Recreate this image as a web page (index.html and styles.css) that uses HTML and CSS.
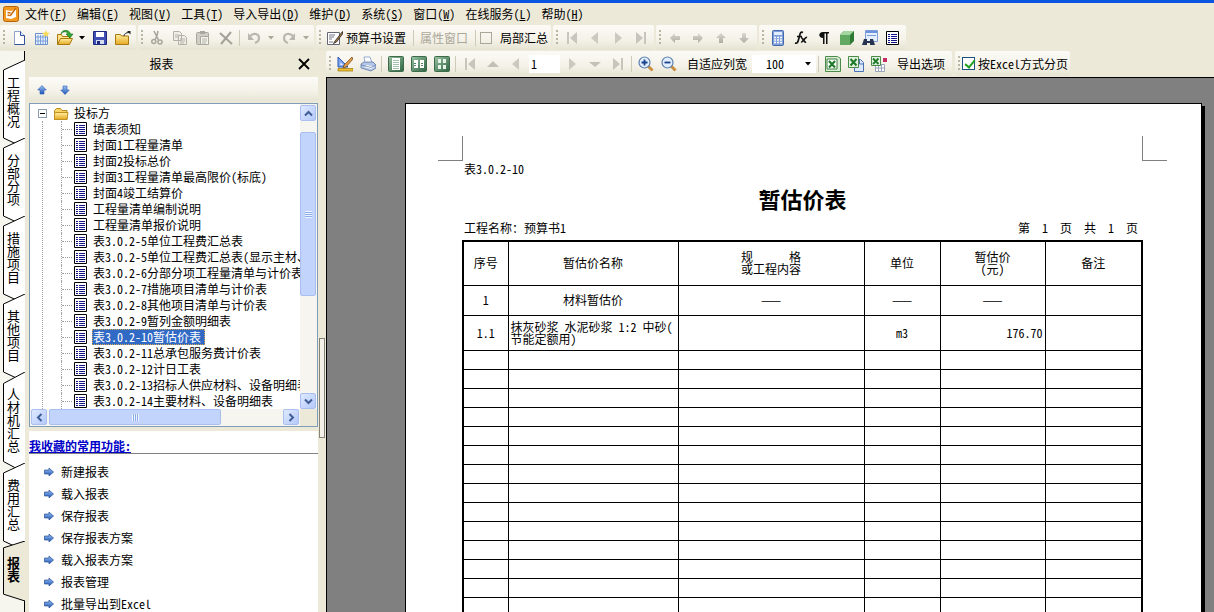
FILE: index.html
```
<!DOCTYPE html>
<html lang="zh-CN">
<head>
<meta charset="utf-8">
<title>报表</title>
<link rel="stylesheet" href="styles.css">
</head>
<body>
<svg class="defs" aria-hidden="true">
  <defs>
    <linearGradient id="gGreen" x1="0" y1="0" x2="1" y2="1"><stop offset="0" stop-color="#9cc4a4"/><stop offset="1" stop-color="#2c6340"/></linearGradient>
    <linearGradient id="gBlue" x1="0" y1="0" x2="0" y2="1"><stop offset="0" stop-color="#9cc3f2"/><stop offset="1" stop-color="#1f55b8"/></linearGradient>
    <linearGradient id="gGold" x1="0" y1="0" x2="0" y2="1"><stop offset="0" stop-color="#fff0a0"/><stop offset="1" stop-color="#e5a823"/></linearGradient>
    <linearGradient id="gGray" x1="0" y1="0" x2="0" y2="1"><stop offset="0" stop-color="#dcdad0"/><stop offset="1" stop-color="#aeaca2"/></linearGradient>
  </defs>
  <symbol id="app" viewBox="0 0 16 16"><rect x=".5" y=".5" width="15" height="15" rx="2" fill="#f39a1e" stroke="#b9640c"/><path d="M3 4l5 1 5-2v8l-5 2-5-1z" fill="#fff"/><path d="M4.500 6.500l3 .5M4.500 9l2 .5M13 2L7 10" stroke="#c8690d" stroke-width="1.500" fill="none"/></symbol>
  <symbol id="new" viewBox="0 0 16 16"><path d="M3.500 1.500h6l4 4v9h-10z" fill="#fff" stroke="#8fa3c8"/><path d="M13.500 5.500v9h-10" fill="none" stroke="#33549a"/><path d="M9.500 1.500v4h4" fill="#dbe6fa" stroke="#33549a"/></symbol>
  <symbol id="newgrid" viewBox="0 0 16 16"><path d="M1.500 3.500h10l2 2v9h-12z" fill="#eaf2ff" stroke="#6d8fcb"/><path d="M4 5v9M6.500 5v9M9 5v9M11.500 5v9M2 7h11M2 11h11" stroke="#7b9fd9" fill="none"/><path d="M12 0l1 2.500L16 3l-2.300 1.500L14 7l-2-1.500L9.500 7l.5-2.500L8 3l3-.500z" fill="#f7dc54"/></symbol>
  <symbol id="open" viewBox="0 0 16 16"><path d="M.5 14.500v-10h4l1 2h7v2" fill="#ffe48a" stroke="#a9790f"/><path d="M.5 14.500l3-6h12l-3 6z" fill="url(#gGold)" stroke="#a9790f"/><path d="M4 4c2-3 6-3 7 0h-2l4 4 3-4h-2.500C12-1 5-1 4 4z" fill="#35a735" stroke="#146b16" stroke-width=".6"/></symbol>
  <symbol id="save" viewBox="0 0 16 16"><path d="M1.500 1.500h13v13h-13z" fill="#3f4fb3" stroke="#1d2a80"/><path d="M4 2h8v5H4z" fill="#fff"/><path d="M4 10h8v4H4z" fill="#d5dbef"/><path d="M5 11h3v3H5z" fill="#1d2a80"/></symbol>
  <symbol id="exit" viewBox="0 0 16 16"><path d="M.5 14.500v-10h5l1 1.500h7v8.500z" fill="url(#gGold)" stroke="#a9790f"/><path d="M12 1h3.500v3.500z" fill="#222"/><path d="M9 6c0-2 2-3.500 5-3.500" fill="none" stroke="#222"/></symbol>
  <symbol id="cut" viewBox="0 0 16 16"><path d="M5 1l4.500 9M9 1L8 5.500 6 10" fill="none" stroke="#aaa89e" stroke-width="1.600"/><circle cx="4.800" cy="11.500" r="2" fill="none" stroke="#aaa89e" stroke-width="1.600"/><circle cx="11" cy="12" r="2" fill="none" stroke="#aaa89e" stroke-width="1.600"/></symbol>
  <symbol id="copy" viewBox="0 0 16 16"><path d="M1.500 1.500h6l2 2v7h-8zM6.500 5.500h6l2 2v7h-8z" fill="#efeee6" stroke="#b4b2a8"/><path d="M3 5h4M3 7h3M8 9h5M8 11h5M8 13h4" stroke="#b4b2a8"/></symbol>
  <symbol id="paste" viewBox="0 0 16 16"><rect x="1.500" y="2.500" width="12" height="12" rx="1" fill="#d0cec4" stroke="#aaa89e"/><path d="M5 1h5v3H5z" fill="#aaa89e"/><path d="M5.500 6.500h8v8h-8z" fill="#f4f3ec" stroke="#aaa89e"/><path d="M7 9h5M7 11h5M7 13h4" stroke="#b4b2a8"/></symbol>
  <symbol id="del" viewBox="0 0 16 16"><path d="M2 3l12 11M13 2L3 14" stroke="#a3a198" stroke-width="2" fill="none"/></symbol>
  <symbol id="undo" viewBox="0 0 16 16"><path d="M4 6c4-4 9-2 9 2 0 2-1 4-4 5" fill="none" stroke="#bab8ae" stroke-width="2.200"/><path d="M2 3v7h6z" fill="#bab8ae"/></symbol>
  <symbol id="redo" viewBox="0 0 16 16"><path d="M12 6C8 2 3 4 3 8c0 2 1 4 4 5" fill="none" stroke="#bab8ae" stroke-width="2.200"/><path d="M14 3v7H8z" fill="#bab8ae"/></symbol>
  <symbol id="dd" viewBox="0 0 6 4"><path d="M0 0h6L3 3.500z" fill="currentColor"/></symbol>
  <symbol id="setup" viewBox="0 0 16 16"><path d="M.5 2.500h12v12H.5z" fill="#fff" stroke="#667"/><path d="M2 5h6M2 7h5M2 9h3M2 12h4" stroke="#778" /><path d="M15.500 1.500L8 11l-1.500 2.500L9.500 12l6-8z" fill="#ad8148" stroke="#222" stroke-width=".8"/></symbol>
  <symbol id="first" viewBox="0 0 16 16"><path d="M3 2h2v12H3zM13 2v12L6 8z" fill="#c8c6bc"/></symbol>
  <symbol id="last" viewBox="0 0 16 16"><path d="M11 2h2v12h-2zM3 2v12l7-6z" fill="#c8c6bc"/></symbol>
  <symbol id="prev" viewBox="0 0 16 16"><path d="M11 2v12L4 8z" fill="#cccac0"/></symbol>
  <symbol id="next" viewBox="0 0 16 16"><path d="M5 2v12l7-6z" fill="#cccac0"/></symbol>
  <symbol id="up" viewBox="0 0 16 16"><path d="M2 11h12L8 5z" fill="#c3c1b7"/></symbol>
  <symbol id="down" viewBox="0 0 16 16"><path d="M2 6h12l-6 5z" fill="#c3c1b7"/></symbol>
  <symbol id="arrL" viewBox="0 0 16 16"><path d="M3 8l5-5v3h5v4H8v3z" fill="url(#gGray)"/></symbol>
  <symbol id="arrR" viewBox="0 0 16 16"><path d="M13 8L8 3v3H3v4h5v3z" fill="url(#gGray)"/></symbol>
  <symbol id="arrU" viewBox="0 0 16 16"><path d="M8 3l5 5h-3v5H6V8H3z" fill="url(#gGray)"/></symbol>
  <symbol id="arrD" viewBox="0 0 16 16"><path d="M8 13l5-5h-3V3H6v5H3z" fill="url(#gGray)"/></symbol>
  <symbol id="bUp" viewBox="0 0 10 10"><path d="M5 .5l4.300 4.500H7v4H3V5H.700z" fill="url(#gBlue)" stroke="#2a5cb6" stroke-width=".6"/></symbol>
  <symbol id="bDown" viewBox="0 0 10 10"><path d="M5 9.500L.7 5H3V1h4v4h2.300z" fill="url(#gBlue)" stroke="#2a5cb6" stroke-width=".6"/></symbol>
  <symbol id="bRight" viewBox="0 0 10 10"><path d="M9.500 5L5 1v2H.500v4H5v2z" fill="url(#gBlue)" stroke="#274f94" stroke-width=".7"/></symbol>
  <symbol id="calc" viewBox="0 0 16 16"><rect x="2.500" y=".5" width="11" height="15" rx="1" fill="#7f9fda" stroke="#4668ad"/><path d="M4 2h8v3H4z" fill="#e3edff"/><path d="M4 7.500h8M4 10h8M4 12.500h8" stroke="#fff" stroke-width="1.500" stroke-dasharray="2 1"/></symbol>
  <symbol id="fx" viewBox="0 0 16 16"><path d="M10 2.500C7 1 7 5 6 8s-1 6-4 5M4 6.500h5M8 8c2-1 3 5 5 4M14 7.500c-2-1-4 5-6 4.500" fill="none" stroke="#111" stroke-width="1.700"/></symbol>
  <symbol id="para" viewBox="0 0 16 16"><path d="M13 2H7C2 2 2 8 7 8v6h1.500V3.500H10V14h1.500V3.500H13z" fill="#111"/></symbol>
  <symbol id="cube" viewBox="0 0 16 16"><path d="M1 5l4-4h10v10l-4 4H1z" fill="#2f7a34"/><path d="M1 5l4-4h10l-4 4z" fill="#a4d6a0"/><path d="M1 5h10v10H1z" fill="#61a962"/></symbol>
  <symbol id="find" viewBox="0 0 16 16"><path d="M3.500.500h12v11h-12z" fill="#e3eeff" stroke="#7d9cd8"/><path d="M4 1h11v2H4z" fill="#6c93dd"/><path d="M5 5.500h9" stroke="#7d9cd8"/><path d="M2 9h3v2h3V9h3l2 6H8v-2H5v2H0z" fill="#26344f"/></symbol>
  <symbol id="report" viewBox="0 0 13 14"><path d="M.500.500h12v13H.500z" fill="#fff" stroke="#000"/><path d="M2 3.500h2M5 3.500h6M2 5.500h2M5 5.500h6M2 7.500h2M5 7.500h6M2 9.500h2M5 9.500h6M2 11.500h2M5 11.500h6" stroke="#14148a"/></symbol>
  <symbol id="design" viewBox="0 0 16 16"><path d="M1 1v10h10z" fill="#7fa5ee" stroke="#2d58b0"/><path d="M3.500 6.500V9H6z" fill="#fff"/><path d="M15 1l-8 8-1 3 3-1 7-8z" fill="#e29a48" stroke="#6c4316" stroke-width=".7"/><path d="M1 12.500h15V15H1z" fill="#f0be2d" stroke="#9a720a" stroke-width=".7"/></symbol>
  <symbol id="print" viewBox="0 0 16 16"><path d="M4 1h6l2 6H5z" fill="#fff" stroke="#7e9acb" stroke-width=".8"/><path d="M1 8l3-2h9l3 3v3l-5 3-10-3z" fill="#b4c6e6" stroke="#5f77a6" stroke-width=".8"/><path d="M4 11l7 2 3-2-7-2z" fill="#fff"/><path d="M1 9l10 2.500 5-2.500" fill="none" stroke="#5f77a6" stroke-width=".7"/></symbol>
  <symbol id="pg1" viewBox="0 0 16 16"><rect x=".5" y=".5" width="15" height="15" rx="1" fill="url(#gGreen)" stroke="#3e6a4c"/><path d="M4 2h8v12H4z" fill="#fff"/><path d="M5 4.500h6M5 6.500h6M5 8.500h6M5 10.500h6M5 12.500h6" stroke="#a4c3ad"/></symbol>
  <symbol id="pg2" viewBox="0 0 16 16"><rect x=".5" y=".5" width="15" height="15" rx="1" fill="url(#gGreen)" stroke="#3e6a4c"/><path d="M3 4h4v8H3zM9 4h4v8H9z" fill="#fff"/><path d="M3 7.500h2M10 7.500h2M3 9.500h2M10 9.500h2" stroke="#4f8260"/></symbol>
  <symbol id="pg4" viewBox="0 0 16 16"><rect x=".5" y=".5" width="15" height="15" rx="1" fill="url(#gGreen)" stroke="#3e6a4c"/><path d="M4 3h3v4H4zM9 3h3v4H9zM4 9h3v4H4zM9 9h3v4H9z" fill="#e8f3ea"/></symbol>
  <symbol id="zin" viewBox="0 0 16 16"><path d="M10 10l4.500 4.500" stroke="#c98f3e" stroke-width="3"/><circle cx="6.500" cy="6.500" r="5.500" fill="#e1efff" stroke="#5d7fae" stroke-width="1.200"/><path d="M3.500 6.500h6M6.500 3.500v6" stroke="#1a428c" stroke-width="1.800"/></symbol>
  <symbol id="zout" viewBox="0 0 16 16"><path d="M10 10l4.500 4.500" stroke="#c98f3e" stroke-width="3"/><circle cx="6.500" cy="6.500" r="5.500" fill="#e1efff" stroke="#5d7fae" stroke-width="1.200"/><path d="M3.500 6.500h6" stroke="#1a428c" stroke-width="1.800"/></symbol>
  <symbol id="xls" viewBox="0 0 16 16"><path d="M.5.500h12l3 2v13H.5z" fill="#d9edd6" stroke="#4b8a49"/><path d="M2 3h10v10H2z" fill="#fff" stroke="#3c7f3c"/><path d="M4 5l6 6.500M10 5l-6 6.500" stroke="#1f7a2a" stroke-width="2.200"/></symbol>
  <symbol id="xls2" viewBox="0 0 16 16"><path d="M6.500 3.500h6l3 3v9h-9z" fill="#dce8fb" stroke="#4a6fb5"/><path d="M.5.500h10v11H.5z" fill="#e2f2df" stroke="#4b8a49"/><path d="M2.500 3l6 6.500M8.500 3l-6 6.500" stroke="#1f7a2a" stroke-width="2"/><path d="M11.500 4v4h4" stroke="#4a6fb5" fill="none"/></symbol>
  <symbol id="xls3" viewBox="0 0 16 16"><path d="M4.500 8.500h9v7h-9zM7.500 8v7M10.500 8v7M5 12h9" fill="#fff" stroke="#9ba4b8"/><path d="M.5.500h9v9h-9z" fill="#e2f2df" stroke="#4b8a49"/><path d="M2 2.500l5.500 5.500M7.500 2.500L2 8" stroke="#1f7a2a" stroke-width="1.800"/><path d="M12 2h4v4h-4z" fill="#c72b64"/></symbol>
  <symbol id="folder" viewBox="0 0 16 14"><path d="M1.500 12.500v-9l2-2h4l1.500 2h5v9z" fill="#f9d568" stroke="#b98a1b"/><path d="M1.500 12.500v-6l1.500-1h12l-1 7z" fill="url(#gGold)" stroke="#c09022"/></symbol>
  <symbol id="close" viewBox="0 0 12 12"><path d="M1 1l10 10M11 1L1 11" stroke="#000" stroke-width="1.800"/></symbol>
  <symbol id="cu" viewBox="0 0 9 9"><path d="M1 6.500L4.500 3 8 6.500" fill="none" stroke="#3e5c96" stroke-width="2"/></symbol>
  <symbol id="cd" viewBox="0 0 9 9"><path d="M1 2.500L4.500 6 8 2.500" fill="none" stroke="#3e5c96" stroke-width="2"/></symbol>
  <symbol id="cl" viewBox="0 0 9 9"><path d="M6.500 1L3 4.500 6.500 8" fill="none" stroke="#3e5c96" stroke-width="2"/></symbol>
  <symbol id="cr" viewBox="0 0 9 9"><path d="M2.500 1L6 4.500 2.500 8" fill="none" stroke="#3e5c96" stroke-width="2"/></symbol>
  <symbol id="tab" viewBox="0 0 22 88" preserveAspectRatio="none"><path d="M22 0L.5 10V78L22 88" fill="currentColor" stroke="#000" vector-effect="non-scaling-stroke"/></symbol>
</svg>

<header class="top">
  <nav class="menu" aria-label="菜单">
    <svg class="i16"><use href="#app"/></svg>
    <button>文件(<u>F</u>)</button><button>编辑(<u>E</u>)</button><button>视图(<u>V</u>)</button><button>工具(<u>T</u>)</button><button>导入导出(<u>D</u>)</button><button>维护(<u>D</u>)</button><button>系统(<u>S</u>)</button><button>窗口(<u>W</u>)</button><button>在线服务(<u>L</u>)</button><button>帮助(<u>H</u>)</button>
  </nav>
  <div class="bar">
    <div class="group">
      <button class="tb" aria-label="新建"><svg class="i16"><use href="#new"/></svg></button>
      <button class="tb" aria-label="新建表"><svg class="i16"><use href="#newgrid"/></svg></button>
      <button class="tb" aria-label="打开"><svg class="i16"><use href="#open"/></svg></button>
      <button class="ddb" aria-label="打开列表"><svg class="arrow"><use href="#dd"/></svg></button>
      <button class="tb" aria-label="保存"><svg class="i16"><use href="#save"/></svg></button>
      <button class="tb" aria-label="退出"><svg class="i16"><use href="#exit"/></svg></button>
    </div>
    <div class="group">
      <button class="tb" aria-label="剪切" disabled><svg class="i16"><use href="#cut"/></svg></button>
      <button class="tb" aria-label="复制" disabled><svg class="i16"><use href="#copy"/></svg></button>
      <button class="tb" aria-label="粘贴" disabled><svg class="i16"><use href="#paste"/></svg></button>
      <button class="tb" aria-label="删除" disabled><svg class="i16"><use href="#del"/></svg></button>
      <span class="sep"></span>
      <button class="tb" aria-label="撤销" disabled><svg class="i16"><use href="#undo"/></svg></button>
      <button class="ddb" aria-label="撤销列表" disabled><svg class="arrow"><use href="#dd"/></svg></button>
      <button class="tb" aria-label="重做" disabled><svg class="i16"><use href="#redo"/></svg></button>
      <button class="ddb" aria-label="重做列表" disabled><svg class="arrow"><use href="#dd"/></svg></button>
    </div>
    <div class="group">
      <button class="txt"><svg class="i16"><use href="#setup"/></svg>预算书设置</button>
      <span class="sep"></span>
      <button class="txt" disabled>属性窗口</button>
      <span class="sep"></span>
      <label class="check part"><input type="checkbox">局部汇总</label>
    </div>
    <div class="group">
      <button class="tb" aria-label="首条" disabled><svg class="i16"><use href="#first"/></svg></button>
      <button class="tb" aria-label="上一条" disabled><svg class="i16"><use href="#prev"/></svg></button>
      <button class="tb" aria-label="下一条" disabled><svg class="i16"><use href="#next"/></svg></button>
      <button class="tb" aria-label="末条" disabled><svg class="i16"><use href="#last"/></svg></button>
    </div>
    <div class="group">
      <button class="tb" aria-label="左移" disabled><svg class="i16"><use href="#arrL"/></svg></button>
      <button class="tb" aria-label="右移" disabled><svg class="i16"><use href="#arrR"/></svg></button>
      <button class="tb" aria-label="上移" disabled><svg class="i16"><use href="#arrU"/></svg></button>
      <button class="tb" aria-label="下移" disabled><svg class="i16"><use href="#arrD"/></svg></button>
    </div>
    <div class="group">
      <button class="tb" aria-label="计算器"><svg class="i16"><use href="#calc"/></svg></button>
      <button class="tb" aria-label="函数"><svg class="i16"><use href="#fx"/></svg></button>
      <button class="tb" aria-label="段落"><svg class="i16"><use href="#para"/></svg></button>
      <button class="tb" aria-label="图元"><svg class="i16"><use href="#cube"/></svg></button>
      <button class="tb" aria-label="查找"><svg class="i16"><use href="#find"/></svg></button>
      <button class="tb" aria-label="报表"><svg class="rep"><use href="#report"/></svg></button>
    </div>
  </div>
</header>

<main class="main">
  <nav class="tabs" aria-label="页签">
    <button class="tab"><svg><use href="#tab"/></svg><span>工程概况</span></button>
    <button class="tab"><svg><use href="#tab"/></svg><span>分部分项</span></button>
    <button class="tab"><svg><use href="#tab"/></svg><span>措施项目</span></button>
    <button class="tab"><svg><use href="#tab"/></svg><span>其他项目</span></button>
    <button class="tab"><svg><use href="#tab"/></svg><span>人材机汇总</span></button>
    <button class="tab"><svg><use href="#tab"/></svg><span>费用汇总</span></button>
    <button class="tab on"><svg><use href="#tab"/></svg><span>报表</span></button>
  </nav>

  <section class="panel">
    <div class="head"><h2>报表</h2><button class="tb" aria-label="关闭"><svg class="x"><use href="#close"/></svg></button></div>
    <div class="mini">
      <button class="tb" aria-label="上移"><svg class="i10"><use href="#bUp"/></svg></button>
      <button class="tb" aria-label="下移"><svg class="i10"><use href="#bDown"/></svg></button>
    </div>
    <div class="treebox">
      <div class="treeview">
        <div class="root"><button class="exp" aria-label="折叠"></button><svg class="fold"><use href="#folder"/></svg>投标方</div>
        <ul class="tree">
          <li><svg class="rep"><use href="#report"/></svg><span>填表须知</span></li>
          <li><svg class="rep"><use href="#report"/></svg><span>封面1工程量清单</span></li>
          <li><svg class="rep"><use href="#report"/></svg><span>封面2投标总价</span></li>
          <li><svg class="rep"><use href="#report"/></svg><span>封面3工程量清单最高限价(标底)</span></li>
          <li><svg class="rep"><use href="#report"/></svg><span>封面4竣工结算价</span></li>
          <li><svg class="rep"><use href="#report"/></svg><span>工程量清单编制说明</span></li>
          <li><svg class="rep"><use href="#report"/></svg><span>工程量清单报价说明</span></li>
          <li><svg class="rep"><use href="#report"/></svg><span>表3.0.2-5单位工程费汇总表</span></li>
          <li><svg class="rep"><use href="#report"/></svg><span>表3.0.2-5单位工程费汇总表(显示主材、</span></li>
          <li><svg class="rep"><use href="#report"/></svg><span>表3.0.2-6分部分项工程量清单与计价表</span></li>
          <li><svg class="rep"><use href="#report"/></svg><span>表3.0.2-7措施项目清单与计价表</span></li>
          <li><svg class="rep"><use href="#report"/></svg><span>表3.0.2-8其他项目清单与计价表</span></li>
          <li><svg class="rep"><use href="#report"/></svg><span>表3.0.2-9暂列金额明细表</span></li>
          <li class="sel"><svg class="rep"><use href="#report"/></svg><span>表3.0.2-10暂估价表</span></li>
          <li><svg class="rep"><use href="#report"/></svg><span>表3.0.2-11总承包服务费计价表</span></li>
          <li><svg class="rep"><use href="#report"/></svg><span>表3.0.2-12计日工表</span></li>
          <li><svg class="rep"><use href="#report"/></svg><span>表3.0.2-13招标人供应材料、设备明细表</span></li>
          <li><svg class="rep"><use href="#report"/></svg><span>表3.0.2-14主要材料、设备明细表</span></li>
        </ul>
      </div>
      <div class="vbar"><button class="sb" aria-label="向上滚动"><svg class="i9"><use href="#cu"/></svg></button><span class="thumb"></span><button class="sb" aria-label="向下滚动"><svg class="i9"><use href="#cd"/></svg></button></div>
      <div class="hbar"><button class="sb" aria-label="向左滚动"><svg class="i9"><use href="#cl"/></svg></button><span class="thumb"></span><button class="sb" aria-label="向右滚动"><svg class="i9"><use href="#cr"/></svg></button></div>
      <div class="corner"></div>
    </div>
    <div class="fav">
      <h3><span>我收藏的常用功能:</span></h3>
      <ul>
        <li><button><svg class="i10"><use href="#bRight"/></svg>新建报表</button></li>
        <li><button><svg class="i10"><use href="#bRight"/></svg>载入报表</button></li>
        <li><button><svg class="i10"><use href="#bRight"/></svg>保存报表</button></li>
        <li><button><svg class="i10"><use href="#bRight"/></svg>保存报表方案</button></li>
        <li><button><svg class="i10"><use href="#bRight"/></svg>载入报表方案</button></li>
        <li><button><svg class="i10"><use href="#bRight"/></svg>报表管理</button></li>
        <li><button><svg class="i10"><use href="#bRight"/></svg>批量导出到Excel</button></li>
      </ul>
    </div>
  </section>
  <div class="split"><button aria-label="收起面板"></button></div>

  <section class="view">
    <div class="bar viewbar">
      <div class="group">
        <button class="tb" aria-label="设计"><svg class="i16"><use href="#design"/></svg></button>
        <button class="tb" aria-label="打印"><svg class="i16"><use href="#print"/></svg></button>
        <span class="sep"></span>
        <button class="tb" aria-label="单页"><svg class="i16"><use href="#pg1"/></svg></button>
        <button class="tb" aria-label="双页"><svg class="i16"><use href="#pg2"/></svg></button>
        <button class="tb" aria-label="四页"><svg class="i16"><use href="#pg4"/></svg></button>
        <span class="sep"></span>
        <button class="tb" aria-label="首页" disabled><svg class="i16"><use href="#first"/></svg></button>
        <button class="tb" aria-label="向上" disabled><svg class="i16"><use href="#up"/></svg></button>
        <button class="tb" aria-label="上一页" disabled><svg class="i16"><use href="#prev"/></svg></button>
        <input class="pageno" type="text" value="1" aria-label="页码">
        <button class="tb" aria-label="下一页" disabled><svg class="i16"><use href="#next"/></svg></button>
        <button class="tb" aria-label="向下" disabled><svg class="i16"><use href="#down"/></svg></button>
        <button class="tb" aria-label="末页" disabled><svg class="i16"><use href="#last"/></svg></button>
        <span class="sep"></span>
        <button class="tb" aria-label="放大"><svg class="i16"><use href="#zin"/></svg></button>
        <button class="tb" aria-label="缩小"><svg class="i16"><use href="#zout"/></svg></button>
        <button class="txt fit">自适应列宽</button>
        <span class="zoom"><select aria-label="缩放比例"><option>100</option></select><svg class="arrow"><use href="#dd"/></svg></span>
        <span class="sep"></span>
        <button class="tb" aria-label="导出Excel"><svg class="i16"><use href="#xls"/></svg></button>
        <button class="tb" aria-label="导出多表"><svg class="i16"><use href="#xls2"/></svg></button>
        <button class="tb" aria-label="批量导出"><svg class="i16"><use href="#xls3"/></svg></button>
        <button class="txt fit">导出选项</button>
      </div>
      <div class="group">
        <label class="check"><input type="checkbox" checked>按Excel方式分页</label>
      </div>
    </div>
    <div class="canvas">
      <article class="page">
        <div class="marks"><span class="mark left"></span><span class="mark right"></span></div>
        <div class="sheet">
          <p class="code">表3.0.2-10</p>
          <h1>暂估价表</h1>
          <div class="meta"><span>工程名称：预算书1</span><span class="pages"><span>第</span><span>1</span><span>页</span><span>共</span><span>1</span><span>页</span></span></div>
          <table>
            <colgroup><col class="c1"><col><col class="c3"><col class="c4"><col class="c5"><col class="c6"></colgroup>
            <thead>
              <tr><th>序号</th><th>暂估价名称</th><th><span class="spread"><span>规</span><span>格</span></span>或工程内容</th><th>单位</th><th>暂估价<br>(元)</th><th>备注</th></tr>
            </thead>
            <tbody>
              <tr class="r30"><td>1</td><td>材料暂估价</td><td>——</td><td>——</td><td>——</td><td></td></tr>
              <tr class="r35"><td>1.1</td><td class="l">抹灰砂浆 水泥砂浆 1:2 中砂(<br>节能定额用)</td><td></td><td>m3</td><td class="r">176.70</td><td></td></tr>
              <tr><td></td><td></td><td></td><td></td><td></td><td></td></tr>
              <tr><td></td><td></td><td></td><td></td><td></td><td></td></tr>
              <tr><td></td><td></td><td></td><td></td><td></td><td></td></tr>
              <tr><td></td><td></td><td></td><td></td><td></td><td></td></tr>
              <tr><td></td><td></td><td></td><td></td><td></td><td></td></tr>
              <tr><td></td><td></td><td></td><td></td><td></td><td></td></tr>
              <tr><td></td><td></td><td></td><td></td><td></td><td></td></tr>
              <tr><td></td><td></td><td></td><td></td><td></td><td></td></tr>
              <tr><td></td><td></td><td></td><td></td><td></td><td></td></tr>
              <tr><td></td><td></td><td></td><td></td><td></td><td></td></tr>
              <tr><td></td><td></td><td></td><td></td><td></td><td></td></tr>
              <tr><td></td><td></td><td></td><td></td><td></td><td></td></tr>
              <tr><td></td><td></td><td></td><td></td><td></td><td></td></tr>
              <tr><td></td><td></td><td></td><td></td><td></td><td></td></tr>
            </tbody>
          </table>
        </div>
      </article>
    </div>
  </section>
</main>
</body>
</html>
```
FILE: styles.css
```
* { box-sizing: border-box; }
html, body { height: 100%; }
body {
  margin: 0;
  display: flex;
  flex-direction: column;
  overflow: hidden;
  background: #ece9d8;
  color: #000;
  font: 12px/16px "Noto Sans CJK SC", sans-serif;
  font-feature-settings: "hwid";
}
button, input, select {
  margin: 0;
  padding: 0;
  border: 0;
  background: none;
  color: inherit;
  font: inherit;
  font-feature-settings: inherit;
}
button:disabled { color: #aca899; }
h1, h2, h3, p, ul { margin: 0; padding: 0; font-weight: normal; }
ul { list-style: none; }
svg { display: block; flex: none; }
.defs { position: absolute; width: 0; height: 0; }
.i16 { width: 16px; height: 16px; }
.i10 { width: 10px; height: 10px; }
.i9 { width: 9px; height: 9px; }
.rep { width: 13px; height: 14px; }
.x { width: 12px; height: 12px; }
.arrow { width: 6px; height: 4px; }

/* menu and toolbars */
.top { border-top: 3px solid #0a55e0; }
.menu { display: flex; align-items: center; height: 22px; padding-left: 3px; }
.menu button { padding: 0 5px; white-space: nowrap; }
.menu svg + button { padding-left: 6px; }
.menu u { text-underline-offset: 1px; }
.bar { display: flex; gap: 2px; height: 26px; padding-bottom: 1px; }
.group {
  display: flex;
  align-items: center;
  padding-right: 2px;
  border-radius: 2px;
  background: linear-gradient(#fbfaf6, #f4f2e8 60%, #e6e3d2);
}
.group::before {
  content: "";
  width: 2px;
  height: 16px;
  margin: 0 2px 0 3px;
  background: repeating-linear-gradient(#b8b5a2 0 2px, transparent 2px 4px);
}
.tb, .ddb { display: flex; align-items: center; justify-content: center; flex: none; width: 23px; height: 22px; }
.ddb { width: 12px; }
.sep { width: 1px; height: 16px; margin: 0 2px; background: #cdcab8; }
.txt { display: flex; align-items: center; gap: 3px; padding: 0 5px 0 4px; white-space: nowrap; }
.check { display: flex; align-items: center; gap: 3px; white-space: nowrap; }
.part { gap: 8px; padding: 0 1px 0 2px; }
.check input { appearance: none; width: 13px; height: 13px; border: 1px solid #1c5180; background: #fff; }
.part input { border-color: #aca899; background: transparent; width: 12px; height: 12px; }
.check input:checked::before {
  content: "";
  display: block;
  width: 4px;
  height: 8px;
  margin: 0 0 0 4px;
  border: solid #21a121;
  border-width: 0 2px 2px 0;
  transform: rotate(40deg);
}

.main { display: flex; flex: 1; min-height: 0; }

/* vertical page tabs */
.tabs {
  display: flex;
  flex-direction: column;
  flex: none;
  width: 25px;
  padding: 9px 0 0 3px;
  background: #f6f5ee linear-gradient(#000, #000) right / 1px 100% no-repeat;
}
.tab { position: relative; display: flex; justify-content: center; padding: 16px 2px 10px 0; color: #fff; }
.tab svg { position: absolute; inset: 0; width: 22px; height: calc(100% + 10px); }
.tab span { position: relative; writing-mode: vertical-rl; color: #000; font-size: 13px; line-height: 16px; }
.tab.on { z-index: 1; padding-bottom: 8px; color: #ece9d8; }
.tab.on span { font-weight: bold; }

/* report list */
.panel { display: flex; flex-direction: column; flex: none; width: 293px; padding-left: 4px; }
.head { display: flex; align-items: center; height: 26px; padding-right: 3px; }
.head h2 { flex: 1; padding-left: 2px; font-size: 12px; text-align: center; }
.mini {
  display: flex;
  height: 24px;
  padding: 2px 0 0 1px;
  background: linear-gradient(#fcfbf7, #f4f2e8 60%, #e8e5d5);
}
.treebox {
  display: grid;
  grid-template: 305px 17px / 1fr 17px;
  margin: 2px 0 4px;
  border: 1px solid #7f9db9;
  background: #fff;
}
.treeview { overflow: hidden; padding-top: 1px; white-space: nowrap; }
.root { display: flex; align-items: center; height: 16px; padding-left: 8px; }
.exp {
  width: 9px;
  height: 9px;
  border: 1px solid #8a9bb0;
  background: linear-gradient(#000, #000) center / 5px 1px no-repeat #fff;
}
.fold { width: 16px; height: 14px; margin: 2px 5px 0 6px; }
.tree { margin-left: 12px; border-left: 1px dotted #a0a0a0; }
.tree li { display: flex; align-items: center; height: 16px; margin-left: 18px; border-left: 1px dotted #a0a0a0; }
.tree li::before { content: ""; flex: none; width: 10px; border-top: 1px dotted #a0a0a0; }
.tree .rep { margin: 0 5px 0 2px; }
.tree span { flex: none; padding: 0 4px 0 1px; }
.tree .sel span { background: #316ac5; color: #fff; outline: 1px dotted #d8a850; outline-offset: -1px; }
.vbar, .hbar { display: flex; background: #f6f5ef; }
.vbar { flex-direction: column; padding: 1px 1px 0 0; }
.vbar .thumb { flex: 0 0 164px; margin: 11px 0 auto; }
.hbar { padding: 0 1px; }
.hbar .thumb { flex: 0 0 172px; margin: 0 auto 0 2px; }
.corner { background: #ece9d8; }
.sb, .thumb { border: 1px solid #a9bff0; border-radius: 2px; background: linear-gradient(135deg, #dfe9ff, #b4c9fa); }
.sb { display: flex; align-items: center; justify-content: center; flex: none; width: 16px; height: 16px; }
.thumb { display: flex; align-items: center; justify-content: center; background: #c3d4fc; }
.thumb::before { content: ""; width: 7px; height: 7px; background: repeating-linear-gradient(#eef4ff 0 1px, #8caee8 1px 2px); }
.hbar .thumb { height: 16px; }
.hbar .thumb::before { background: repeating-linear-gradient(90deg, #eef4ff 0 1px, #8caee8 1px 2px); }

/* favourites */
.fav { flex: 1; min-height: 0; padding-top: 7px; background: #fff; overflow: hidden; }
.fav h3 { height: 16px; border-bottom: 1px solid #808080; font-size: 12px; font-weight: bold; line-height: 16px; color: #0000c8; text-decoration: underline; }
.fav ul { padding: 7px 0 0 15px; }
.fav button { display: flex; align-items: center; gap: 7px; height: 22px; }

.split { display: flex; align-items: center; flex: none; width: 8px; padding: 112px 0 0 1px; }
.split button { width: 6px; height: 100px; border: 1px solid #85837a; background: #f4f2e8; }

/* preview */
.view { display: flex; flex-direction: column; flex: 1; min-width: 0; }
.viewbar { gap: 3px; }
.pageno { width: 31px; height: 18px; margin-left: 2px; padding-left: 2px; background: #fff; }
.viewbar .fit { padding: 0 5px 0 7px; }
.zoom { display: flex; align-items: center; width: 64px; height: 18px; padding-right: 5px; background: #fff; }
.zoom select { flex: 1; appearance: none; padding-left: 14px; }
.canvas { flex: 1; min-height: 0; padding: 25px 12px 0 78px; overflow: hidden; border: solid #000; border-width: 1px 0 0 1px; background: #808080; }
.page { min-height: 900px; border: 1px solid #000; background: #fff; box-shadow: 3px 3px 0 #000; }
.marks { display: flex; justify-content: space-between; padding: 32px 34px 0 32px; }
.mark { width: 25px; height: 25px; border-bottom: 1px solid #808080; }
.left { border-right: 1px solid #808080; }
.right { border-left: 1px solid #808080; }
.sheet { padding: 0 58px 0 56px; }
.code { padding-left: 2px; }
h1 { padding: 8px 0 9px; font-size: 22px; font-weight: bold; line-height: 26px; text-align: center; }
.meta { display: flex; justify-content: space-between; padding: 0 5px 4px 2px; }
.pages { display: flex; gap: 12px; }
table { width: 100%; table-layout: fixed; border-collapse: collapse; border: 2px solid #000; line-height: 12px; }
th, td { padding: 0 2px; border: 1px solid #000; font-weight: normal; text-align: center; white-space: nowrap; }
.c1 { width: 45px; }
.c3 { width: 186px; }
.c4 { width: 76px; }
.c5 { width: 105px; }
.c6 { width: 97px; }
tr { height: 19px; }
thead tr { height: 44px; }
.r30 { height: 30px; }
.r35 { height: 35px; }
.spread { display: flex; justify-content: space-between; width: 60px; margin: 0 auto; }
.l { text-align: left; }
.r { text-align: right; }
```
